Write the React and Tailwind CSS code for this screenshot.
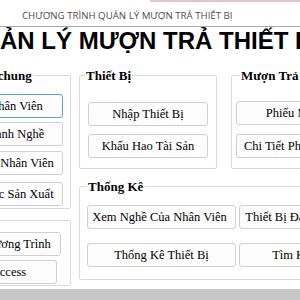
import React from "react";

const serif = { fontFamily: '"Liberation Serif", "Times New Roman", serif' };

function Btn({ children, className = "", focused = false }) {
  return (
    <button
      type="button"
      className={
        "h-[24px] shrink-0 rounded-[3px] bg-[#fdfdfd] text-[12.5px] leading-none text-black whitespace-nowrap overflow-hidden border " +
        (focused ? "border-[#5aa3d6] " : "border-[#cfcfcf] ") +
        className
      }
      style={serif}
    >
      {children}
    </button>
  );
}

function Group({ title, className = "", legendClass = "", bodyClass = "", children }) {
  return (
    <fieldset className={"border border-[#dadada] rounded-[2px] min-w-0 " + className}>
      {title ? (
        <legend
          className={"px-[1px] text-[13px] leading-[15px] font-bold text-black whitespace-nowrap " + legendClass}
          style={serif}
        >
          {title}
        </legend>
      ) : null}
      <div className={bodyClass}>{children}</div>
    </fieldset>
  );
}

export default function App() {
  return (
    <div className="w-[300px] h-[300px] overflow-hidden bg-white flex flex-col">
      {/* title bar */}
      <div className="h-[27px] shrink-0 flex flex-col border-b border-[#a8a8a8]">
        <div className="h-[2px] ml-[150px] bg-[#e8c2c8]"></div>
        <div
          className="pl-[22px] pt-[8px] text-[9.7px] leading-[12px] text-[#4d4d4d] whitespace-nowrap"
          style={{ fontFamily: '"Open Sans", "Noto Sans", sans-serif' }}
        >
          CHƯƠNG TRÌNH QUẢN LÝ MƯỢN TRẢ THIẾT BỊ
        </div>
      </div>

      {/* big title */}
      <div
        className="h-[28px] shrink-0 ml-[-36px] text-[24px] leading-[28px] font-bold text-black whitespace-nowrap"
        style={{ fontFamily: '"Liberation Sans", Arial, sans-serif' }}
      >
        QUẢN LÝ MƯỢN TRẢ THIẾT BỊ
      </div>

      {/* main area */}
      <div className="mt-[13px] ml-[-79px] flex gap-[8px] shrink-0">
        {/* column A */}
        <div className="w-[150px] shrink-0 flex flex-col">
          <Group
            title="Danh mục chung"
            legendClass="ml-[14px]"
            bodyClass="flex flex-col items-end pr-[7px] pt-[11px] pb-[2px]"
          >
            <Btn focused className="w-[94px]">Nhân Viên</Btn>
            <Btn className="w-[94px] mt-[4px] pr-[7px]">Ngành Nghề</Btn>
            <Btn className="w-[94px] mt-[5px] pr-[10px]">Nghề Nhân Viên</Btn>
            <Btn className="w-[94px] mt-[7px] pr-[2px]">Nước Sản Xuất</Btn>
          </Group>
          <Group className="mt-[11px]" bodyClass="flex flex-col items-end pt-[11px] pb-[1px]">
            <Btn className="w-[109px] h-[20px] mr-[9px]">Về Chương Trình</Btn>
            <Btn className="w-[97px] h-[21px] mt-[4px] mr-[13px]">Access</Btn>
          </Group>
        </div>

        {/* column B */}
        <div className="shrink-0 flex flex-col">
          <div className="flex gap-[14px]">
            <Group
              title="Thiết Bị"
              legendClass="ml-[5px]"
              className="w-[138px] shrink-0"
              bodyClass="flex flex-col px-[8px] pt-[19px] pb-[10px]"
            >
              <Btn className="w-[120px]">Nhập Thiết Bị</Btn>
              <Btn className="w-[120px] mt-[8px]">Khấu Hao Tài Sản</Btn>
            </Group>
            <Group
              title="Mượn Trả"
              legendClass="ml-[8px]"
              className="w-[150px] shrink-0"
              bodyClass="flex flex-col pl-[4px] pt-[18px] pb-[10px]"
            >
              <Btn className="w-[122px]">Phiếu Mượn</Btn>
              <Btn className="w-[122px] mt-[9px]">Chi Tiết Phiếu Mượn</Btn>
            </Group>
          </div>
          <Group
            title="Thống Kê"
            legendClass="ml-[7px]"
            className="mt-[10px] w-[320px]"
            bodyClass="flex flex-col gap-[14px] pl-[7px] pt-[11px] pb-[12px]"
          >
            <div className="flex gap-[3px]">
              <Btn className="w-[149px] pr-[4px]">Xem Nghề Của Nhân Viên</Btn>
              <Btn className="w-[118px]">Thiết Bị Đang Mượn</Btn>
            </div>
            <div className="flex gap-[3px]">
              <Btn className="w-[149px]">Thống Kê Thiết Bị</Btn>
              <Btn className="w-[118px]">Tìm Kiếm</Btn>
            </div>
          </Group>
        </div>
      </div>

      {/* bottom bar */}
      <div className="mt-[3px] h-[13px] shrink-0 bg-[#c7c7c7]"></div>
      <div className="h-[1px] shrink-0 bg-[#a87878]"></div>
      <div className="flex-1 bg-[#f3caca]"></div>
    </div>
  );
}
